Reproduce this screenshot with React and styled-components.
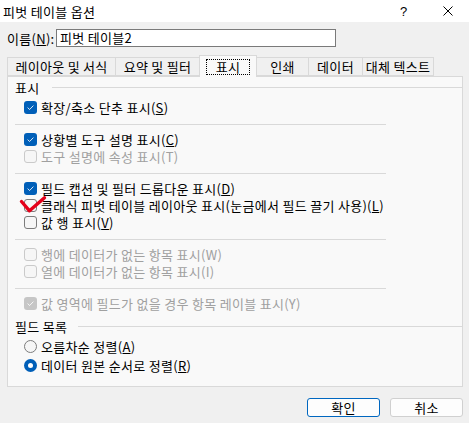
import React from 'react';
import styled, { createGlobalStyle } from 'styled-components';

const Global = createGlobalStyle`
  html, body { margin: 0; padding: 0; background: #f0f0f0; }
  body {
    font-family: "Noto Sans CJK KR", "Noto Sans", sans-serif;
    font-size: 13px;
    letter-spacing: 0.3px;
    color: #000;
  }
  u { text-underline-offset: 1px; }
`;

const Dialog = styled.div`
  width: 469px;
  height: 423px;
  background: #f0f0f0;
  overflow: hidden;
`;

const TitleBar = styled.div`
  height: 22px;
  background: #fff;
  display: flex;
  align-items: center;
  padding-left: 3px;
  line-height: 17px;
`;

const TitleText = styled.span`
  flex: 1;
`;

const Help = styled.span`
  width: 9px;
  font-family: "Liberation Sans", sans-serif;
  font-size: 13px;
  margin-right: 34px;
`;

const Close = styled.svg`
  margin-right: 16px;
`;

const Body = styled.div`
  padding: 0 6px 0 7px;
`;

const NameRow = styled.div`
  display: flex;
  align-items: center;
  margin-top: 7px;
  height: 18px;
`;

const NameLabel = styled.label`
  width: 49px;
  line-height: 17px;
`;

const NameInput = styled.div`
  width: 275px;
  height: 16px;
  border: 1px solid #7a7a7a;
  background: #fff;
  line-height: 16px;
  padding-left: 3px;
  box-sizing: content-box;
`;

const TabStrip = styled.div`
  display: flex;
  align-items: flex-end;
  margin-top: 8px;
  height: 21px;
`;

const Tab = styled.div`
  width: ${p => p.w}px;
  height: ${p => (p.active ? 22 : 19)}px;
  margin-bottom: ${p => (p.active ? -1 : 0)}px;
  position: relative;
  z-index: ${p => (p.active ? 1 : 0)};
  box-sizing: border-box;
  border: 1px solid #d9d9d9;
  border-bottom: ${p => (p.active ? 'none' : '1px solid #d9d9d9')};
  margin-left: -1px;
  background: ${p => (p.active ? '#f9f9f9' : '#f0f0f0')};
  display: flex;
  align-items: center;
  justify-content: center;
  line-height: 15px;
  &:first-child { margin-left: 0; }
`;

const Focus = styled.span`
  outline: 1px dotted #000;
  padding: 0 9px;
  line-height: 14px;
`;

const Panel = styled.div`
  width: 456px;
  height: 311px;
  box-sizing: border-box;
  border: 1px solid #d9d9d9;
  background: #f9f9f9;
  padding: 2px 0 0 7px;
`;

const GroupHead = styled.div`
  display: flex;
  align-items: center;
  height: 17px;
  line-height: 17px;
  margin-top: ${p => p.mt || 0}px;
  margin-bottom: ${p => p.mb || 3}px;
  &::after {
    content: "";
    flex: none;
    width: ${p => p.line}px;
    margin-left: auto;
    height: 1px;
    background: #d9d9d9;
  }
`;

const Sep = styled.div`
  width: 371px;
  height: 1px;
  background: #d9d9d9;
  margin: 8px 0 6px;
`;

const Row = styled.div`
  position: relative;
  display: flex;
  align-items: center;
  height: ${p => p.h || 17}px;
  line-height: 17px;
  padding-left: 9px;
  color: ${p => (p.disabled ? '#a0a0a0' : '#000')};
  white-space: nowrap;
`;

const Box = styled.span`
  flex: none;
  width: 13px;
  height: 13px;
  box-sizing: border-box;
  border-radius: 3px;
  margin-right: 4px;
  display: flex;
  align-items: center;
  justify-content: center;
  background: ${p => (p.checked ? (p.disabled ? '#c6c6c6' : '#005fb8') : '#f6f6f6')};
  border: ${p => (p.checked ? 'none' : `1px solid ${p.disabled ? '#cacaca' : '#7c7c7c'}`)};
`;

const Radio = styled.span`
  flex: none;
  width: 13px;
  height: 13px;
  box-sizing: border-box;
  border-radius: 50%;
  margin-right: 4px;
  display: flex;
  align-items: center;
  justify-content: center;
  background: ${p => (p.checked ? '#005fb8' : '#f6f6f6')};
  border: ${p => (p.checked ? 'none' : '1px solid #7c7c7c')};
  &::after {
    content: "";
    display: ${p => (p.checked ? 'block' : 'none')};
    width: 5px;
    height: 5px;
    border-radius: 50%;
    background: #fff;
  }
`;

const RedCheck = styled.svg`
  position: absolute;
  left: 6px;
  top: 0px;
  overflow: visible;
`;

const Footer = styled.div`
  display: flex;
  justify-content: flex-end;
  gap: 10px;
  margin-top: 11px;
`;

const Button = styled.button`
  width: 73px;
  height: 19px;
  box-sizing: border-box;
  border-radius: 3px;
  border: 1px solid ${p => (p.primary ? '#0067c0' : '#d0d0d0')};
  background: #fdfdfd;
  font: inherit;
  letter-spacing: inherit;
  line-height: 15px;
  padding: 0;
  color: #000;
`;

function Check({ checked, disabled }) {
  return (
    <Box checked={checked} disabled={disabled}>
      {checked && (
        <svg width="9" height="9" viewBox="0 0 9 9">
          <path d="M1.6 4.6 L3.6 6.5 L7.4 2.6" fill="none" stroke="#fff" strokeWidth="1" opacity="0.85" />
        </svg>
      )}
    </Box>
  );
}

function CheckRow({ checked, disabled, children, extra }) {
  return (
    <Row disabled={disabled}>
      <Check checked={checked} disabled={disabled} />
      <span>{children}</span>
      {extra}
    </Row>
  );
}

const tabs = [
  { label: '레이아웃 및 서식', w: 109 },
  { label: '요약 및 필터', w: 85 },
  { label: '표시', w: 58, active: true },
  { label: '인쇄', w: 53 },
  { label: '데이터', w: 55 },
  { label: '대체 텍스트', w: 72 },
];

export default function App() {
  return (
    <Dialog>
      <Global />
      <TitleBar>
        <TitleText>피벗 테이블 옵션</TitleText>
        <Help>?</Help>
        <Close width="10" height="10" viewBox="0 0 10 10">
          <path d="M0.5 0.5 L9.5 9.5 M9.5 0.5 L0.5 9.5" stroke="#000" strokeWidth="1" />
        </Close>
      </TitleBar>
      <Body>
        <NameRow>
          <NameLabel>이름(<u>N</u>):</NameLabel>
          <NameInput>피벗 테이블2</NameInput>
        </NameRow>
        <TabStrip>
          {tabs.map(t => (
            <Tab key={t.label} w={t.w} active={t.active}>
              {t.active ? <Focus>{t.label}</Focus> : t.label}
            </Tab>
          ))}
        </TabStrip>
        <Panel>
          <GroupHead line={410}>표시</GroupHead>
          <CheckRow checked>확장/축소 단추 표시(<u>S</u>)</CheckRow>
          <Sep />
          <CheckRow checked>상황별 도구 설명 표시(<u>C</u>)</CheckRow>
          <CheckRow disabled>도구 설명에 속성 표시(T)</CheckRow>
          <Sep />
          <CheckRow checked>필드 캡션 및 필터 드롭다운 표시(<u>D</u>)</CheckRow>
          <CheckRow
            extra={
              <RedCheck width="24" height="15" viewBox="0 0 24 15">
                <path d="M0.5 4.5 L8.5 13.8 L23.5 0.8" fill="none" stroke="#e5001a" strokeWidth="3.4" strokeLinecap="round" strokeLinejoin="round" />
              </RedCheck>
            }
          >
            클래식 피벗 테이블 레이아웃 표시(눈금에서 필드 끌기 사용)(<u>L</u>)
          </CheckRow>
          <CheckRow>값 행 표시(<u>V</u>)</CheckRow>
          <Sep />
          <CheckRow disabled>행에 데이터가 없는 항목 표시(W)</CheckRow>
          <CheckRow disabled>열에 데이터가 없는 항목 표시(I)</CheckRow>
          <Sep />
          <CheckRow checked disabled>값 영역에 필드가 없을 경우 항목 레이블 표시(Y)</CheckRow>
          <GroupHead line={384} mt={6} mb={2}>필드 목록</GroupHead>
          <Row h={19}>
            <Radio />
            <span>오름차순 정렬(<u>A</u>)</span>
          </Row>
          <Row h={19}>
            <Radio checked />
            <span>데이터 원본 순서로 정렬(<u>R</u>)</span>
          </Row>
        </Panel>
        <Footer>
          <Button primary>확인</Button>
          <Button>취소</Button>
        </Footer>
      </Body>
    </Dialog>
  );
}
